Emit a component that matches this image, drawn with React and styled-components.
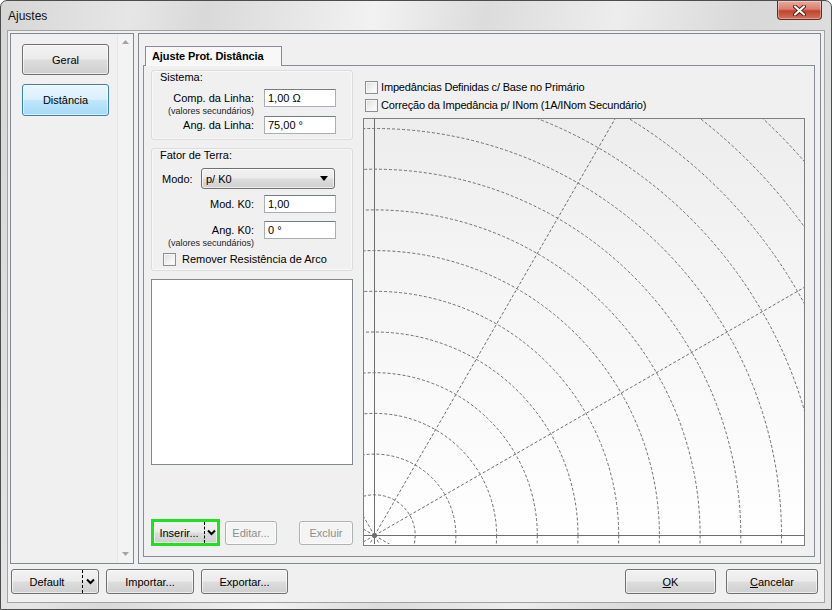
import React from "react";
import styled, { createGlobalStyle } from "styled-components";

const font = `"Liberation Sans", Arial, sans-serif`;

const GlobalStyle = createGlobalStyle`
  html, body {
    margin: 0;
    padding: 0;
    background: #ffffff;
    font-family: ${font};
  }
  * { box-sizing: border-box; }
`;

const Window = styled.div`
  width: 832px;
  height: 610px;
  display: flex;
  flex-direction: column;
  border: 1px solid #4d4d4d;
  border-radius: 7px 7px 0 0;
  padding: 0 6px 6px;
  background: linear-gradient(
    100deg,
    #d6d6d6 0%,
    #e6e6e6 14%,
    #d9d9d9 22%,
    #f2f2f2 40%,
    #dcdcdc 52%,
    #ededed 66%,
    #d8d8d8 80%,
    #e4e4e4 100%
  );
`;

const TitleBar = styled.div`
  height: 29px;
  display: flex;
  justify-content: space-between;
  align-items: flex-start;
`;

const Title = styled.span`
  margin: 8px 0 0 1px;
  font-size: 12px;
  color: #111;
`;

const CloseButton = styled.div`
  width: 45px;
  height: 19px;
  margin-right: 3px;
  border: 1px solid #6b2a1f;
  border-top: none;
  border-radius: 0 0 4px 4px;
  display: flex;
  align-items: center;
  justify-content: center;
  background: linear-gradient(#e9aa9e 0%, #d8806f 45%, #c2432c 55%, #d2705d 100%);
  box-shadow: inset 0 0 0 1px rgba(255, 255, 255, 0.35);
`;

const Client = styled.div`
  flex: 1;
  display: flex;
  flex-direction: column;
  background: #f0f0f0;
  border: 1px solid #a3a3a3;
  padding: 2px 3px 0 2px;
`;

const TopRow = styled.div`
  height: 531px;
  display: flex;
  gap: 4px;
`;

const Sidebar = styled.div`
  width: 124px;
  display: flex;
  border: 1px solid #828790;
  background: #f0f0f0;
`;

const NavList = styled.div`
  flex: 1;
  display: flex;
  flex-direction: column;
  gap: 9px;
  padding: 10px 0 0 11px;
`;

const NavButton = styled.div`
  width: 87px;
  height: ${(p) => (p.$active ? 32 : 31)}px;
  border-radius: 3px;
  display: flex;
  align-items: center;
  justify-content: center;
  font-size: 11px;
  border: 1px solid ${(p) => (p.$active ? "#3c7fb1" : "#707070")};
  background: ${(p) =>
    p.$active
      ? "linear-gradient(#eaf6fd 0%, #d9f0fc 48%, #bee6fd 52%, #a7d9f5 100%)"
      : "linear-gradient(#f2f2f2 0%, #ebebeb 48%, #dddddd 52%, #cfcfcf 100%)"};
  box-shadow: inset 0 0 0 1px rgba(255, 255, 255, 0.6);
`;

const ScrollTrack = styled.div`
  width: 16px;
  display: flex;
  flex-direction: column;
  justify-content: space-between;
  align-items: center;
  padding: 6px 0 7px;
  background: #f3f3f3;
  border-left: 1px solid #e6e6e6;
`;

const MainPanel = styled.div`
  flex: 1;
  display: flex;
  flex-direction: column;
  border: 1px solid #828790;
  padding: 12px 5px 6px 4px;
`;

const TabHeader = styled.div`
  width: 137px;
  height: 20px;
  margin-left: 2px;
  margin-bottom: -1px;
  position: relative;
  z-index: 1;
  border: 1px solid #898c95;
  border-bottom: none;
  background: #f8f8f8;
  font-size: 11px;
  font-weight: bold;
  padding: 3px 0 0 6px;
  letter-spacing: -0.1px;
`;

const TabPanel = styled.div`
  flex: 1;
  display: flex;
  gap: 10px;
  border: 1px solid #898c95;
  padding: 4px 9px 10px 7px;
`;

const LeftColumn = styled.div`
  width: 202px;
  display: flex;
  flex-direction: column;
`;

const Group = styled.div`
  height: ${(p) => p.$h}px;
  margin-bottom: 8px;
  border: 1px solid #dcdcdc;
  border-radius: 3px;
  background: #f0f0f0;
  box-shadow: inset 0 0 0 1px #f8f8f8;
  display: flex;
  flex-direction: column;
  font-size: 11px;
`;

const GroupLabel = styled.div`
  height: 13px;
  line-height: 13px;
  padding-left: ${(p) => p.$indent}px;
  margin-bottom: ${(p) => p.$gap}px;
`;

const FieldRow = styled.div`
  display: flex;
  align-items: center;
  height: 18px;
  margin-top: ${(p) => p.$top || 0}px;
`;

const FieldLabel = styled.span`
  width: 102px;
  text-align: right;
  margin-right: 10px;
  font-size: 11px;
`;

const SubLabel = styled.div`
  width: 102px;
  text-align: right;
  font-size: 9px;
  line-height: 9px;
  height: 9px;
  color: #222;
`;

const TextInput = styled.div`
  width: 72px;
  height: 18px;
  border: 1px solid #abadb3;
  border-top-color: #767a82;
  background: #ffffff;
  font-size: 11px;
  line-height: 16px;
  padding-left: 3px;
`;

const ModeRow = styled.div`
  display: flex;
  align-items: center;
  height: 21px;
  padding-left: 10px;
`;

const ModeLabel = styled.span`
  width: 39px;
`;

const Select = styled.div`
  width: 134px;
  height: 21px;
  border: 1px solid #707070;
  border-radius: 3px;
  display: flex;
  align-items: center;
  justify-content: space-between;
  padding: 0 6px 0 4px;
  background: linear-gradient(#f2f2f2 0%, #ebebeb 48%, #dddddd 52%, #cfcfcf 100%);
  box-shadow: inset 0 0 0 1px rgba(255, 255, 255, 0.6);
`;

const CheckRow = styled.label`
  display: flex;
  align-items: center;
  gap: ${(p) => p.$gap || 6}px;
  height: ${(p) => p.$h || 14}px;
  padding-left: ${(p) => p.$indent || 0}px;
  margin-top: ${(p) => p.$top || 0}px;
  font-size: 11px;
  letter-spacing: ${(p) => (p.$tight ? "-0.17px" : "0")};
`;

const CheckBox = styled.span`
  width: 13px;
  height: 13px;
  border: 1px solid #8e8f8f;
  background: linear-gradient(135deg, #dcdcdc 0%, #f4f4f4 60%, #ffffff 100%);
  box-shadow: inset 0 0 0 1px #f4f4f4;
  flex: none;
`;

const ListBox = styled.div`
  height: 186px;
  border: 1px solid #828790;
  background: #ffffff;
`;

const ButtonRow = styled.div`
  margin-top: auto;
  display: flex;
  align-items: center;
  height: 27px;
`;

const Button = styled.div`
  width: ${(p) => p.$w}px;
  height: ${(p) => p.$h || 25}px;
  margin-left: ${(p) => p.$ml || 0}px;
  border-radius: 3px;
  display: flex;
  align-items: center;
  justify-content: center;
  font-size: 11px;
  color: ${(p) => (p.$disabled ? "#8d8d8d" : "#000")};
  border: 1px solid ${(p) => (p.$disabled ? "#adb2b5" : "#707070")};
  background: ${(p) =>
    p.$disabled
      ? "#f4f4f4"
      : "linear-gradient(#f2f2f2 0%, #ebebeb 48%, #dddddd 52%, #cfcfcf 100%)"};
  box-shadow: inset 0 0 0 1px rgba(255, 255, 255, 0.6);
`;

const SplitButton = styled(Button)`
  justify-content: flex-start;
  border: ${(p) => (p.$focus ? "3px solid #1ee21e" : "1px solid #707070")};
  border-radius: ${(p) => (p.$focus ? "0" : "3px")};
`;

const SplitText = styled.span`
  flex: 1;
  text-align: center;
`;

const SplitArrow = styled.span`
  width: ${(p) => p.$w}px;
  height: 100%;
  display: flex;
  align-items: center;
  justify-content: center;
  border-left: 1px dashed #000;
`;

const RightColumn = styled.div`
  width: 442px;
  display: flex;
  flex-direction: column;
  padding-top: 8px;
`;

const ChartBox = styled.div`
  flex: 1;
  margin-top: 4px;
  border: 1px solid #7f7f7f;
  background: linear-gradient(#ededed 0%, #f6f6f6 45%, #ffffff 100%);
  overflow: hidden;
`;

const BottomBar = styled.div`
  display: flex;
  align-items: center;
  height: 25px;
  margin-top: 5px;
  padding: 0 3px 0 1px;
  gap: 7px;
`;

const Spacer = styled.div`
  flex: 1;
`;

const Mnemonic = styled.span`
  text-decoration: underline;
`;

const Chevron = () => (
  <svg width="9" height="7" viewBox="0 0 9 7">
    <path d="M1 1.5 L4.5 5 L8 1.5" fill="none" stroke="#000" strokeWidth="2" />
  </svg>
);

const ScrollArrow = ({ down }) => (
  <svg width="7" height="4" viewBox="0 0 7 4">
    <path d={down ? "M0 0 H7 L3.5 4 Z" : "M0 4 H7 L3.5 0 Z"} fill="#a5a5a5" />
  </svg>
);

const CloseGlyph = () => (
  <svg width="13" height="11" viewBox="0 0 13 11">
    <path d="M2 1.5 L11 9.5 M11 1.5 L2 9.5" stroke="#5a1a10" strokeWidth="4" strokeLinecap="round" />
    <path d="M2 1.5 L11 9.5 M11 1.5 L2 9.5" stroke="#ffffff" strokeWidth="2.2" strokeLinecap="round" />
  </svg>
);

const CHART_W = 440;
const CHART_H = 425;
const OX = 10;
const OY = 416;
const STEP = 40.7;

const PolarChart = () => {
  const circles = [];
  for (let n = 1; n <= 16; n++) circles.push(n * STEP);
  const angles = [];
  for (let a = 0; a < 360; a += 30) if (a % 90 !== 0) angles.push(a);
  return (
    <svg width={CHART_W} height={CHART_H} style={{ display: "block" }}>
      <g fill="none" stroke="#6e6e6e" strokeWidth="1" strokeDasharray="3 2">
        {circles.map((r) => (
          <circle key={r} cx={OX + 0.5} cy={OY + 0.5} r={r} />
        ))}
        {angles.map((a) => {
          const rad = (a * Math.PI) / 180;
          return (
            <line
              key={a}
              x1={OX + 0.5}
              y1={OY + 0.5}
              x2={OX + 0.5 + 900 * Math.cos(rad)}
              y2={OY + 0.5 - 900 * Math.sin(rad)}
            />
          );
        })}
      </g>
      <g stroke="#6e6e6e" strokeWidth="1">
        <line x1={OX + 0.5} y1="0" x2={OX + 0.5} y2={CHART_H} />
        <line x1="0" y1={OY + 0.5} x2={CHART_W} y2={OY + 0.5} />
      </g>
      <circle cx={OX + 0.5} cy={OY + 0.5} r="2" fill="#6e6e6e" />
    </svg>
  );
};

export default function App() {
  return (
    <>
      <GlobalStyle />
      <Window>
        <TitleBar>
          <Title>Ajustes</Title>
          <CloseButton>
            <CloseGlyph />
          </CloseButton>
        </TitleBar>
        <Client>
          <TopRow>
            <Sidebar>
              <NavList>
                <NavButton>Geral</NavButton>
                <NavButton $active>Distância</NavButton>
              </NavList>
              <ScrollTrack>
                <ScrollArrow />
                <ScrollArrow down />
              </ScrollTrack>
            </Sidebar>
            <MainPanel>
              <TabHeader>Ajuste Prot. Distância</TabHeader>
              <TabPanel>
                <LeftColumn>
                  <Group $h={70}>
                    <GroupLabel $indent={8} $gap={5}>Sistema:</GroupLabel>
                    <FieldRow>
                      <FieldLabel>Comp. da Linha:</FieldLabel>
                      <TextInput>1,00 Ω</TextInput>
                    </FieldRow>
                    <SubLabel>(valores secundários)</SubLabel>
                    <FieldRow>
                      <FieldLabel>Ang. da Linha:</FieldLabel>
                      <TextInput>75,00 °</TextInput>
                    </FieldRow>
                  </Group>
                  <Group $h={123}>
                    <GroupLabel $indent={8} $gap={6}>Fator de Terra:</GroupLabel>
                    <ModeRow>
                      <ModeLabel>Modo:</ModeLabel>
                      <Select>
                        <span>p/ K0</span>
                        <svg width="8" height="5" viewBox="0 0 8 5">
                          <path d="M0 0 H8 L4 5 Z" fill="#000" />
                        </svg>
                      </Select>
                    </ModeRow>
                    <FieldRow $top={6}>
                      <FieldLabel>Mod. K0:</FieldLabel>
                      <TextInput>1,00</TextInput>
                    </FieldRow>
                    <FieldRow $top={8}>
                      <FieldLabel>Ang. K0:</FieldLabel>
                      <TextInput>0 °</TextInput>
                    </FieldRow>
                    <SubLabel>(valores secundários)</SubLabel>
                    <CheckRow $indent={11} $top={4} $h={14}>
                      <CheckBox />
                      Remover Resistência de Arco
                    </CheckRow>
                  </Group>
                  <ListBox />
                  <ButtonRow>
                    <SplitButton $w={69} $h={27} $focus>
                      <SplitText>Inserir...</SplitText>
                      <SplitArrow $w={13}>
                        <Chevron />
                      </SplitArrow>
                    </SplitButton>
                    <Button $w={52} $h={24} $ml={5} $disabled>
                      Editar...
                    </Button>
                    <Spacer />
                    <Button $w={54} $h={24} $disabled>
                      Excluir
                    </Button>
                  </ButtonRow>
                </LeftColumn>
                <RightColumn>
                  <CheckRow $indent={2} $gap={3} $h={18} $tight>
                    <CheckBox />
                    Impedâncias Definidas c/ Base no Primário
                  </CheckRow>
                  <CheckRow $indent={2} $gap={3} $h={18} $tight>
                    <CheckBox />
                    Correção da Impedância p/ INom (1A/INom Secundário)
                  </CheckRow>
                  <ChartBox>
                    <PolarChart />
                  </ChartBox>
                </RightColumn>
              </TabPanel>
            </MainPanel>
          </TopRow>
          <BottomBar>
            <SplitButton $w={88}>
              <SplitText>Default</SplitText>
              <SplitArrow $w={16}>
                <Chevron />
              </SplitArrow>
            </SplitButton>
            <Button $w={88}>Importar...</Button>
            <Button $w={87}>Exportar...</Button>
            <Spacer />
            <Button $w={91}>
              <span>
                <Mnemonic>O</Mnemonic>K
              </span>
            </Button>
            <Button $w={92} $ml={3}>
              <span>
                <Mnemonic>C</Mnemonic>ancelar
              </span>
            </Button>
          </BottomBar>
        </Client>
      </Window>
    </>
  );
}
